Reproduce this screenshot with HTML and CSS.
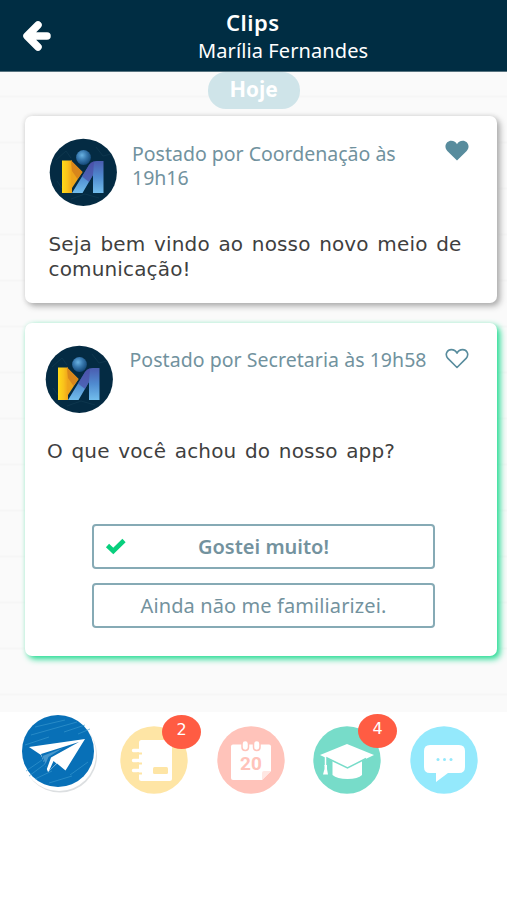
FILE: index.html
```html
<!DOCTYPE html>
<html lang="pt-BR">
<head>
<meta charset="utf-8">
<title>Clips</title>
<link rel="stylesheet" href="styles.css">
</head>
<body>
<svg class="defs" aria-hidden="true">
  <defs>
    <linearGradient id="gold" x2="1"><stop stop-color="#ffda18"/><stop offset=".55" stop-color="#f9c31b"/><stop offset="1" stop-color="#f0a31b"/></linearGradient>
    <linearGradient id="blue" x2="0" y2="1"><stop stop-color="#4a5cb0"/><stop offset=".5" stop-color="#4f8bd0"/><stop offset="1" stop-color="#72bdec"/></linearGradient>
    <radialGradient id="ball" cx=".4" cy=".35" r=".65"><stop stop-color="#69b2e2"/><stop offset=".5" stop-color="#3878ae"/><stop offset="1" stop-color="#154a7a"/></radialGradient>
    <symbol id="logo" viewBox="0 0 68 68">
      <circle cx="34.300" cy="34.300" r="33.600" fill="#042b43"/>
      <path d="M7 22l10-9 5 7M47 9l7 9 8-2M22 61l14-5 14 4M8 43l5 7" fill="none" stroke="#113b52" stroke-width=".7"/>
      <path d="M13 22.500h10V55H13z" fill="url(#gold)"/>
      <path d="M22 22.500l11.500 11.500L23 50z" fill="#eda51b"/>
      <path d="M22 22.500l11.500 11.500-5 7-5.500-8z" fill="#d8861b"/>
      <path d="M23 55L40 27q3-4 8-4h6.500V55H44V37L33.500 55z" fill="url(#blue)"/>
      <path d="M33 38.500L40 27q2-3 5-3.800L44 37l-4 7z" fill="#4b4aa4" opacity=".65"/>
      <circle cx="34.500" cy="19.500" r="7.400" fill="url(#ball)"/>
    </symbol>
  </defs>
</svg>
<header class="topbar">
  <svg class="back" viewBox="0 0 30 32"><path d="M16 5L5 16l11 11M6 16h19" fill="none" stroke="#fff" stroke-width="7.500" stroke-linecap="round" stroke-linejoin="round"/></svg>
  <div class="titles">
    <h1 class="title">Clips</h1>
    <div class="person">Marília Fernandes</div>
  </div>
</header>
<main class="feed">
  <div class="day">Hoje</div>
  <article class="card">
    <div class="head">
      <svg class="logo"><use href="#logo"/></svg>
      <div class="meta">Postado por Coordenação às<br>19h16</div>
      <svg class="heart" viewBox="0 0 24 21"><path d="M12 20.500L2.300 11C-2 5.800 2 .8 6.200.8 9 .8 11 2.300 12 4.200 13 2.300 15 .8 17.800.8 22 .8 26 5.800 21.700 11z" fill="#588c9d"/></svg>
    </div>
    <p class="body">Seja bem vindo ao nosso novo meio de<br>comunicação!</p>
  </article>
  <article class="card card-poll">
    <div class="head">
      <svg class="logo"><use href="#logo"/></svg>
      <div class="meta">Postado por Secretaria às 19h58</div>
      <svg class="heart" viewBox="0 0 24 21"><path d="M12 19.500L2.900 10.400C-.8 5.800 2.600 1.600 6.300 1.600 9 1.600 11 3.200 12 5.200 13 3.200 15 1.600 17.700 1.600 21.400 1.600 24.800 5.800 21.100 10.400z" fill="none" stroke="#588c9d" stroke-width="1.600" stroke-linejoin="round"/></svg>
    </div>
    <p class="body">O que você achou do nosso app?</p>
    <div class="options">
      <button class="option option-on"><svg class="check" viewBox="0 0 22 18"><path d="M2.500 8.500l5.800 5.500L19 3.500" fill="none" stroke="#08cf7d" stroke-width="4.600"/></svg><span>Gostei muito!</span></button>
      <button class="option"><span>Ainda não me familiarizei.</span></button>
    </div>
  </article>
</main>
<nav class="tabs">
  <div class="tab tab-on">
    <svg viewBox="0 0 76 80">
      <circle cx="39" cy="41.500" r="37" fill="#dcdfe1"/><circle cx="38" cy="40" r="37" fill="#fff"/>
      <circle cx="37" cy="37" r="36" fill="#0870b7"/>
      <path d="M14 13l30-7M10 21l46-13M4 31l24-8M43 18l21-7M5 57l16-11M8 62l20-15M14 65l17-8M49 61l18-13M57 20l12-5M28 69l23-7" stroke="#3c9cd1" stroke-width="1" opacity=".6"/>
      <path d="M8 33L64 25 44.500 56.500 36 49.500 27 58 20 41z" fill="#fff"/>
      <path d="M20 40L58 28 30 43.500 25.500 56z" fill="#0870b7"/>
      <path d="M21.500 42L42 34 27.500 43 24.500 50z" fill="#4797cc"/>
      <path d="M28 57l7.500-7.500-3-2.500z" fill="#0870b7"/>
    </svg>
  </div>
  <div class="tab">
    <svg viewBox="0 0 68 68"><circle cx="34" cy="34" r="33.700" fill="#fee5a5"/><rect x="19" y="14" width="33" height="41" rx="2.500" fill="#fff"/><path d="M13.500 24.500h9M13.500 34.500h9M13.500 44.500h9" stroke="#fff" stroke-width="3.400" stroke-linecap="round"/><path d="M17 27.500h5M17 37.500h5M17 47.500h5" stroke="#fee5a5" stroke-width="2"/><rect x="33" y="41" width="15" height="7" rx="1.500" fill="#fee5a5"/></svg>
    <span class="badge">2</span>
  </div>
  <div class="tab">
    <svg viewBox="0 0 68 68"><circle cx="34" cy="34" r="33.700" fill="#ffc3ba"/><path d="M16 18.500h36q2 0 2 2V45l-9 9H16q-2 0-2-2V20.500q0-2 2-2z" fill="#fff"/><path d="M45 54v-7q0-2 2-2h7z" fill="#ffe7e3"/><rect x="25" y="14.500" width="6.500" height="10" rx="3.200" fill="#fff" stroke="#ffc3ba" stroke-width="1.500"/><rect x="36.500" y="14.500" width="6.500" height="10" rx="3.200" fill="#fff" stroke="#ffc3ba" stroke-width="1.500"/><text x="34" y="44" text-anchor="middle" class="date">20</text></svg>
  </div>
  <div class="tab">
    <svg viewBox="0 0 68 68"><circle cx="34" cy="34" r="33.700" fill="#77dcc9"/><path d="M19.500 33h29.500v16q-4 4-14.500 4t-15-4z" fill="#fff"/><path d="M7 29L34 18l27 11L34 42z" fill="#fff"/><path d="M13 31.500L34.500 42 53 32.500" fill="none" stroke="#77dcc9" stroke-width="1.500"/><path d="M12.500 31v9" stroke="#fff" stroke-width="1.500"/><path d="M11.500 39h2.500v4l1 5.500h-5l1.500-5.500z" fill="#fff"/></svg>
    <span class="badge badge-high">4</span>
  </div>
  <div class="tab">
    <svg viewBox="0 0 68 68"><circle cx="34" cy="34" r="33.700" fill="#94e9fc"/><path d="M20 19h29q6 0 6 6v16q0 6-6 6H38l-12 9v-9h-6q-6 0-6-6V25q0-6 6-6z" fill="#fff"/><g fill="#94e9fc"><circle cx="28" cy="33.500" r="1.500"/><circle cx="34.500" cy="33.500" r="1.500"/><circle cx="41" cy="33.500" r="1.500"/></g></svg>
  </div>
</nav>
</body>
</html>
```
FILE: styles.css
```css
* { box-sizing: border-box; }
body { margin: 0; height: 900px; overflow: hidden; background: #fff; font-family: "Noto Sans", sans-serif; }
.defs { display: block; width: 0; height: 0; }
.topbar { height: 72px; background: #002d43; border-bottom: 1px solid #57737f; color: #fff; display: flex; }
.back { width: 30px; height: 32px; margin: 20px 0 0 22px; flex: none; }
.titles { padding: 8px 0 0 146px; white-space: nowrap; }
.title { margin: 0 0 0 28px; font-size: 22px; line-height: 29px; font-weight: 600; letter-spacing: .5px; }
.person { font-size: 20px; line-height: 27px; letter-spacing: .1px; }
.feed { height: 640px; padding: 0 10px 0 25px; background: repeating-linear-gradient(#fafafa 0 23px, #f6f6f6 24px 25px, #fafafa 26px 46px); overflow: hidden; }
.day { width: 92px; height: 37px; margin-left: 183px; border-radius: 18px; background: #cfe4e9; color: #fff; font: 700 22px/35px Roboto, sans-serif; letter-spacing: .6px; text-align: center; }
.card { height: 187px; margin-top: 7px; padding: 22px 24px 0 23.5px; background: #fff; border-radius: 7px; box-shadow: 3px 3px 6px #aaa, 0 0 5px #ddd; }
.card-poll { height: 333px; margin-top: 20px; padding: 22px 24px 0 20px; box-shadow: 3px 3px 6px #1edb91, 0 0 4px #e3f4ec; }
.head { display: flex; height: 70px; }
.logo { width: 68px; height: 68px; flex: none; }
.meta { flex: 1; margin: 4px 0 0 15.5px; font-size: 19.5px; line-height: 24px; color: #71929e; white-space: nowrap; }
.heart { width: 24px; height: 21px; margin: 2px 4px 0 0; flex: none; }
.card-poll .meta { margin: 3px 0 0 16.5px; letter-spacing: .05px; }
.card-poll .heart { margin-top: 3px; }
.body { margin: 24px 0 0; font: 20px/25px "DejaVu Sans", sans-serif; letter-spacing: .15px; word-spacing: 2.1px; color: #3f3f3f; white-space: nowrap; }
.card-poll .body { padding-left: 2px; }
.options { display: flex; flex-direction: column; gap: 14px; width: 343px; margin: 60px 0 0 47px; }
.option { height: 45px; padding: 0; border: 2px solid #86aab5; border-radius: 4px; background: #fff; color: #73929e; font: 20px/24px "Noto Sans", sans-serif; letter-spacing: .1px; position: relative; white-space: nowrap; }
.option-on { font-weight: 600; letter-spacing: 0; }
.check { position: absolute; left: 11px; top: 11px; width: 22px; height: 18px; }
.tabs { display: flex; padding: 2px 0 0 21px; }
.tab { position: relative; width: 68px; height: 68px; margin: 12px 0 0 28.600px; }
.tab svg { display: block; width: 100%; height: 100%; }
.tab-on { width: 76px; height: 80px; margin: 0; }
.tab-on + .tab { margin-left: 23px; }
.badge { position: absolute; left: 42px; top: -11px; width: 39px; height: 34px; border-radius: 50%; background: #ff5c43; color: #fff; font: 16px/30px "DejaVu Sans", sans-serif; text-align: center; }
.badge-high { left: 45px; top: -12px; }
.date { font: 700 19px Roboto, sans-serif; fill: #ffc3ba; }
```
